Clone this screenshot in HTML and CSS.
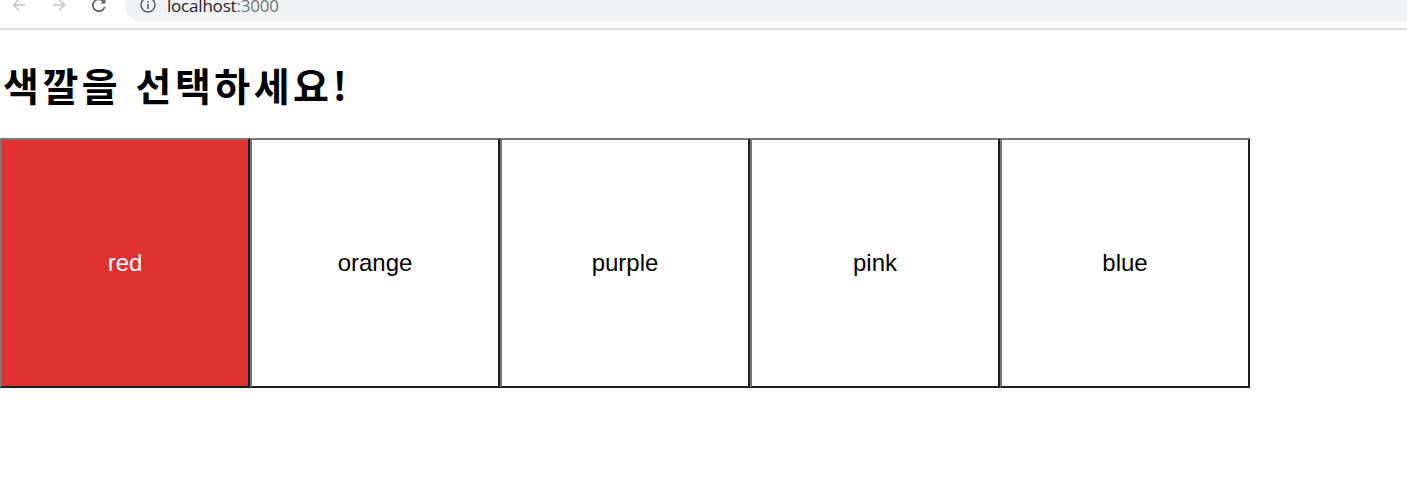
FILE: index.html
```html
<!DOCTYPE html>
<html lang="ko">
<head>
<meta charset="utf-8">
<title>localhost:3000</title>
<link rel="stylesheet" href="styles.css">
</head>
<body>
<div class="chrome">
  <div class="toolbar">
    <span class="nav-btn">
      <svg width="20" height="20" viewBox="0 0 20 20"><path d="M16 10H5M10 4.5L4.5 10 10 15.5" fill="none" stroke="#c4c7c5" stroke-width="1.6"/></svg>
    </span>
    <span class="nav-btn">
      <svg width="20" height="20" viewBox="0 0 20 20"><path d="M4 10h11M10 4.5L15.5 10 10 15.5" fill="none" stroke="#c4c7c5" stroke-width="1.6"/></svg>
    </span>
    <span class="nav-btn">
      <svg width="20" height="20" viewBox="0 0 20 20"><path d="M15.2 7.5A6 6 0 1 0 15.6 12" fill="none" stroke="#5f6368" stroke-width="1.8"/><path d="M16.5 3.5v5h-5z" fill="#5f6368"/></svg>
    </span>
    <div class="omnibox">
      <svg class="info" width="18" height="18" viewBox="0 0 18 18"><circle cx="9" cy="9" r="7" fill="none" stroke="#5f6368" stroke-width="1.6"/><rect x="8.2" y="8" width="1.6" height="5" fill="#5f6368"/><rect x="8.2" y="5" width="1.6" height="1.7" fill="#5f6368"/></svg>
      <span class="url"><span class="host">localhost</span><span class="port">:3000</span></span>
    </div>
  </div>
</div>
<main class="page">
  <h1 class="title">색깔을 선택하세요!</h1>
  <div class="colors">
    <button class="color-box selected">red</button>
    <button class="color-box">orange</button>
    <button class="color-box">purple</button>
    <button class="color-box">pink</button>
    <button class="color-box">blue</button>
  </div>
</main>
</body>
</html>
```

FILE: styles.css
```css
html, body {
  margin: 0;
  padding: 0;
  background: #fff;
}

body {
  font-family: "Liberation Sans", Arial, sans-serif;
}

.chrome {
  height: 28px;
  overflow: hidden;
  border-bottom: 2px solid #dadce0;
  background: #fff;
}

.toolbar {
  height: 34px;
  margin-top: -12px;
  display: flex;
  align-items: center;
  padding-left: 9px;
}

.nav-btn {
  width: 20px;
  height: 20px;
  margin-right: 20px;
  display: flex;
}

.omnibox {
  flex: 1;
  height: 34px;
  margin-left: -4px;
  background: #f0f2f4;
  border-radius: 17px 0 0 17px;
  display: flex;
  align-items: center;
  padding-left: 14px;
}

.info {
  margin-right: 10px;
}

.url {
  font-family: "Open Sans", "Liberation Sans", sans-serif;
  font-size: 17px;
  letter-spacing: -0.2px;
}

.host {
  color: #202124;
}

.port {
  color: #70757a;
}

.title {
  margin: 27px 0 27px 3px;
  font-family: "Noto Sans CJK KR", sans-serif;
  font-weight: 700;
  font-size: 39px;
  line-height: 54px;
  letter-spacing: 3.5px;
  color: #000;
}

.colors {
  display: flex;
}

.color-box {
  width: 250px;
  height: 250px;
  padding: 0;
  margin: 0;
  background: #fff;
  border-style: solid;
  border-width: 2px;
  border-color: #767676 #1e1e1e #1e1e1e #767676;
  font-family: "Liberation Sans", Arial, sans-serif;
  font-size: 24px;
  color: #000;
}

.color-box.selected {
  background: #e03131;
  color: #fff;
}
```
